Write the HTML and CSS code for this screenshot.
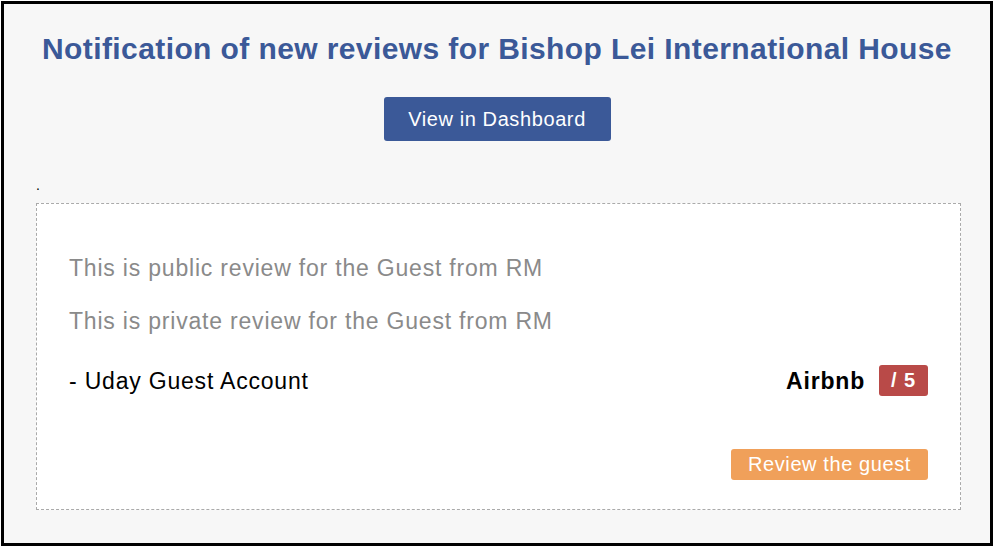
FILE: index.html
```html
<!DOCTYPE html>
<html lang="en">
<head>
    <meta charset="UTF-8">
    <meta name="viewport" content="width=device-width, initial-scale=1.0">
    <title>New reviews</title>
    <link rel="stylesheet" href="styles.css">
</head>
<body>
    <div class="frame">
        <h1 class="title">Notification of new reviews for Bishop Lei International House</h1>

        <div class="button-container">
            <a class="button" href="#">View in Dashboard</a>
        </div>

        <div class="dot">.</div>

        <div class="review">
            <p class="review-text">This is public review for the Guest from RM</p>
            <p class="review-text">This is private review for the Guest from RM</p>

            <div class="review-footer">
                <span class="guest">- Uday Guest Account</span>
                <span class="source">
                    <b>Airbnb</b>
                    <span class="score">/ 5</span>
                </span>
            </div>

            <div class="review-actions">
                <a class="review-button" href="#">Review the guest</a>
            </div>
        </div>
    </div>
</body>
</html>
```

FILE: styles.css
```css
body {
    font-family: "Liberation Sans", Arial, sans-serif;
    background-color: #ffffff;
    margin: 0;
    padding: 1px;
}

.frame {
    height: 539px;
    border: 3px solid #000000;
    background-color: #f7f7f7;
}

.title {
    margin: 0;
    padding-top: 26px;
    text-align: center;
    font-size: 30px;
    line-height: 38px;
    letter-spacing: 0.4px;
    font-weight: bold;
    color: #3b5998;
}

.button-container {
    margin-top: 29px;
    text-align: center;
}

.button {
    display: inline-block;
    width: 227px;
    height: 44px;
    line-height: 44px;
    background-color: #3b5998; /* синий */
    color: #ffffff;
    font-size: 20px;
    letter-spacing: 0.6px;
    text-decoration: none;
    border-radius: 3px;
}

.dot {
    margin: 37px 0 0 32px;
    font-size: 14px;
    line-height: 14px;
    height: 14px;
}

.review {
    margin: 11px 29px 0 32px;
    padding: 49px 32px 29px 32px;
    border: 1px dashed #aaaaaa;
    background-color: #ffffff;
}

.review-text {
    margin: 0 0 23px 0;
    font-size: 23px;
    line-height: 30px;
    letter-spacing: 0.8px;
    color: #8a8a8a;
}

.review-footer {
    display: flex;
    justify-content: space-between;
    align-items: center;
    margin-top: 29px;
    font-size: 23px;
    line-height: 30px;
    letter-spacing: 0.8px;
    color: #000000;
}

.source {
    display: flex;
    align-items: center;
    gap: 14px;
}

.score {
    display: inline-block;
    width: 49px;
    height: 31px;
    line-height: 31px;
    text-align: center;
    background-color: #b94a48;
    color: #ffffff;
    font-weight: bold;
    font-size: 20px;
    letter-spacing: 1px;
    border-radius: 3px;
}

.review-actions {
    margin-top: 53px;
    text-align: right;
}

.review-button {
    display: inline-block;
    width: 197px;
    height: 31px;
    line-height: 31px;
    text-align: center;
    background-color: #f0a05a;
    color: #ffffff;
    font-size: 20px;
    letter-spacing: 0.6px;
    text-decoration: none;
    border-radius: 3px;
}
```
